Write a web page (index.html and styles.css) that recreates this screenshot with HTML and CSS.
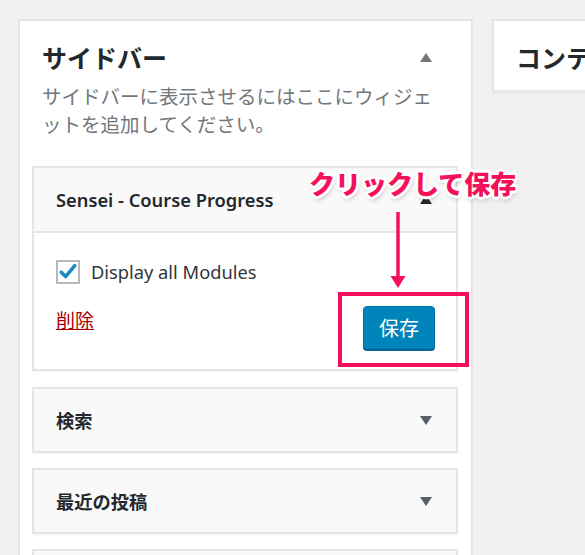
FILE: index.html
```html
<!DOCTYPE html>
<html lang="ja">
<head>
<meta charset="UTF-8" />
<title>ウィジェット</title>
<link rel="stylesheet" href="styles.css">
</head>
<body>

<div class="page">

  <!-- サイドバー -->
  <section class="panel sidebar">
    <div class="panel-head">
      <h2 class="panel-title">サイドバー</h2>
      <span class="toggle up light"></span>
    </div>
    <p class="panel-desc">サイドバーに表示させるにはここにウィジェットを追加してください。</p>

    <div class="widget first">
      <div class="widget-top">
        <h3>Sensei - Course Progress</h3>
        <span class="toggle up"></span>
      </div>
      <div class="widget-inside">
        <label class="check-row">
          <span class="checkbox">
            <svg viewBox="0 0 20 20" width="20" height="20"><path d="M3.2 10.2 L7.6 14.6 L16.8 3.6" fill="none" stroke="#1e8cbe" stroke-width="3.6" stroke-linecap="round" stroke-linejoin="round"/></svg>
          </span>
          Display all Modules
        </label>
        <div class="widget-actions">
          <a href="#" class="delete">削除</a>
          <button class="save">保存</button>
        </div>
      </div>
    </div>

    <div class="widget">
      <div class="widget-top">
        <h3>検索</h3>
        <span class="toggle down"></span>
      </div>
    </div>

    <div class="widget">
      <div class="widget-top">
        <h3>最近の投稿</h3>
        <span class="toggle down"></span>
      </div>
    </div>

    <!-- 次のウィジェット（画面外） -->
    <div class="widget">
      <div class="widget-top"></div>
    </div>
  </section>

  <!-- コンテンツ -->
  <section class="panel content">
    <h2 class="panel-title">コンテ</h2>
  </section>

</div>

<!-- 注釈 -->
<div class="note">クリックして保存</div>
<svg class="note-arrow" width="20" height="80" viewBox="0 0 20 80">
  <line x1="10" y1="0" x2="10" y2="68" stroke="#f5105a" stroke-width="3.5"/>
  <polygon points="2.5,64 17.5,64 10,76" fill="#f5105a"/>
</svg>
<div class="note-box"></div>

</body>
</html>
```

FILE: styles.css
```css
html, body {
    margin: 0;
    height: 100%;
    overflow: hidden;
}

body {
    background: #f1f1f1;
    font-family: "Noto Sans", "Noto Sans CJK JP", sans-serif;
    color: #32373c;
}

.page {
    display: flex;
    gap: 19px;
    padding: 19px 0 0 18px;
}

.panel {
    background: #fff;
    border: 2px solid #e5e5e5;
    box-sizing: border-box;
    flex: none;
}

.sidebar {
    width: 455px;
    height: 545px;
    overflow: hidden;
    padding: 20px 13px 0 12px;
}

.content {
    width: 100px;
    height: 73px;
    padding: 20px 0 0 22px;
    box-shadow: 0 1px 2px rgba(0,0,0,0.06);
}

.panel-head {
    display: flex;
    align-items: center;
    justify-content: space-between;
    padding: 0 26px 0 10px;
}

.panel-title {
    margin: 0;
    font-family: "Noto Sans CJK JP", sans-serif;
    font-size: 25px;
    line-height: 32px;
    font-weight: 700;
    color: #23282d;
    white-space: nowrap;
}

.panel-desc {
    margin: 9px 0 28px 0;
    padding: 0 23px 0 10px;
    font-family: "Noto Sans CJK JP", sans-serif;
    font-size: 19.5px;
    line-height: 28px;
    color: #72777c;
}

/* 三角 */
.toggle {
    width: 0;
    height: 0;
    border-left: 6px solid transparent;
    border-right: 6px solid transparent;
}

.toggle.up {
    border-bottom: 9px solid #23282d;
}

.toggle.up.light {
    border-bottom-color: #72777c;
}

.toggle.down {
    border-top: 9px solid #555d66;
}

.widget {
    border: 2px solid #e5e5e5;
    margin-bottom: 15px;
    box-shadow: 0 1px 1px rgba(0,0,0,0.04);
}

.widget.first {
    margin-bottom: 16px;
}

.widget-top {
    height: 62px;
    background: #f9f9f9;
    display: flex;
    align-items: center;
    justify-content: space-between;
    padding: 0 24px 0 22px;
}

.widget.first .widget-top {
    height: 63px;
}

.widget-top h3 {
    margin: 0;
    font-size: 18.3px;
    font-weight: 600;
    color: #23282d;
}

.widget-inside {
    border-top: 2px solid #e5e5e5;
    background: #fff;
    padding: 26px 21px 20px 22px;
}

.check-row {
    display: flex;
    align-items: center;
    gap: 11px;
    font-size: 18.3px;
    color: #32373c;
}

.checkbox {
    width: 24px;
    height: 24px;
    box-sizing: border-box;
    border: 2px solid #b4b9be;
    background: #fff;
    display: flex;
    align-items: center;
    justify-content: center;
}

.widget-actions {
    display: flex;
    justify-content: space-between;
    align-items: flex-start;
    margin-top: 22px;
}

.delete {
    font-family: "Noto Sans CJK JP", sans-serif;
    font-size: 19px;
    line-height: 27px;
    color: #a00;
    text-decoration: underline;
}

.save {
    width: 72px;
    height: 43px;
    background: #0085ba;
    border: 1px solid #0073aa;
    border-radius: 4px;
    box-shadow: 0 2px 0 #006799;
    color: #fff;
    font-family: "Noto Sans CJK JP", sans-serif;
    font-size: 20px;
    padding: 0;
}

/* 注釈 */
.note {
    position: absolute;
    left: 309px;
    top: 168px;
    font-family: "Noto Sans CJK JP", sans-serif;
    font-size: 26px;
    line-height: 30px;
    font-weight: 900;
    color: #f5105a;
    white-space: nowrap;
    text-shadow:
        2px 0 0 #fff, -2px 0 0 #fff, 0 2px 0 #fff, 0 -2px 0 #fff,
        2px 2px 0 #fff, -2px -2px 0 #fff, 2px -2px 0 #fff, -2px 2px 0 #fff,
        3px 0 0 #fff, -3px 0 0 #fff, 0 3px 0 #fff, 0 -3px 0 #fff,
        1px 3px 5px rgba(0,0,0,0.35);
}

.note-arrow {
    position: absolute;
    left: 388px;
    top: 212px;
}

.note-box {
    position: absolute;
    left: 338px;
    top: 292px;
    width: 131px;
    height: 75px;
    box-sizing: border-box;
    border: 4px solid #f5105a;
}
```
